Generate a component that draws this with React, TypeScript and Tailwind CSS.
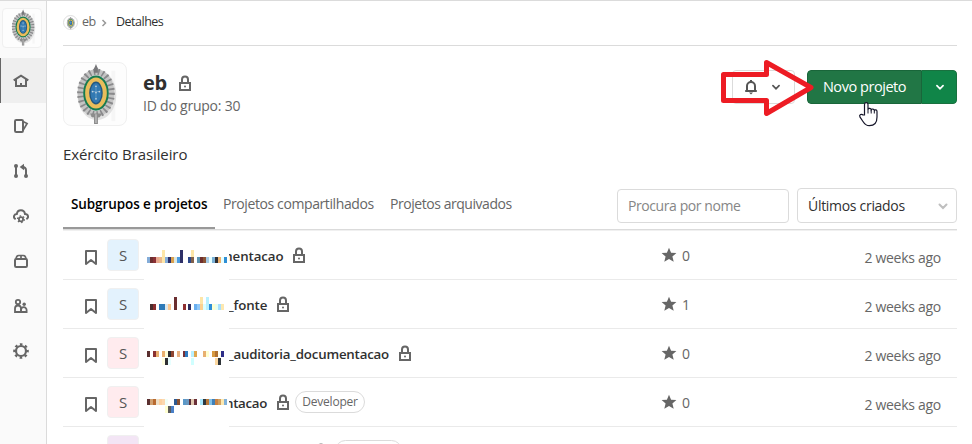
import type { ReactNode } from "react";

type Block = [column: number, color: string, level?: "up" | "down" | "tall"];

type GroupItem = {
  name: string;
  nameClass: string;
  avatarClass: string;
  mosaic: Block[];
  mosaicTop: number;
  stars: number;
  role?: string;
};

const GROUPS: GroupItem[] = [
  {
    name: "mentacao",
    nameClass: "-ml-[9px] w-[63px] tracking-[-0.1px]",
    avatarClass: "bg-[#e3f2fd]",
    mosaicTop: 26,
    stars: 0,
    mosaic: [
      [0, "#84acd8"], [1, "#6b2f30"], [2, "#8a3035"], [3, "#e9a990"], [4, "#eab88c"],
      [5, "#fde6a8", "tall"], [6, "#84acd8"], [7, "#2e3068"], [8, "#d9a04e"], [9, "#dce8e0"],
      [10, "#4a9be0"], [11, "#2e3068", "tall"], [13.7, "#2e4a8c"], [14.7, "#80604b"],
      [14.7, "#fde6a8", "up"], [16.7, "#5b93b0"], [17.7, "#6f302d"], [18.7, "#8a5435"],
      [19.7, "#a5cbe6"], [20.7, "#e4ffff"], [21.7, "#7bb0d6"], [22.7, "#2e2e33"],
      [23.7, "#edb06c"], [24.7, "#e8ffff"], [25.7, "#2e8fd5"],
    ],
  },
  {
    name: "_fonte",
    nameClass: "-ml-[1px] w-[39px] tracking-[-0.1px]",
    avatarClass: "bg-[#e3f2fd]",
    mosaicTop: 24,
    stars: 1,
    mosaic: [
      [1, "#4a2e2e"], [2, "#8a2f30"], [4, "#2e7ab8"], [5, "#2e7ab8"], [6, "#e0e8ea"],
      [7, "#fcc890"], [9, "#6b2e30", "tall"], [12, "#8f3030"], [13.7, "#2e2e60"],
      [15.7, "#6ab0f0"], [16.7, "#90c8f8"], [17.7, "#fcd090"], [17.7, "#fde6a8", "up"],
      [18.7, "#ddffff"], [19.7, "#b8f0ff", "tall"], [20.7, "#2e8fd8"], [21.7, "#ffffd0"],
      [22.7, "#e8fff0"], [23.7, "#a8e0ff"], [24.7, "#fde8b0"],
    ],
  },
  {
    name: "_auditoria_documentacao",
    nameClass: "-ml-[1px] w-[161px] tracking-[-0.2px]",
    avatarClass: "bg-[#ffebee]",
    mosaicTop: 22,
    stars: 0,
    mosaic: [
      [0, "#5a2f2f"], [2, "#8a3030"], [3, "#e8b070"], [5, "#eab070"], [6, "#ffffd8"],
      [5, "#ffffe0", "down"], [6, "#2e2e33", "down"], [7, "#2e2e33"], [7, "#e8ffff", "down"],
      [8, "#8f4530"], [10, "#e8b080"], [12, "#762f35"], [12.8, "#2e7abf"], [14.7, "#b8f0ff"],
      [14.7, "#d0ffff", "down"], [15.7, "#e0a850"], [18.7, "#e8b070"], [19.7, "#ffffd0"],
      [21.7, "#d89a40"], [22.7, "#b07030"], [22.7, "#fcd8a0", "down"], [23.7, "#fffff0"],
      [23.7, "#2e3338", "down"], [24.7, "#2e2e88"],
    ],
  },
  {
    name: "ntacao",
    nameClass: "-ml-[4px] w-[42px] tracking-[-0.3px]",
    avatarClass: "bg-[#ffebee]",
    mosaicTop: 21,
    stars: 0,
    role: "Developer",
    mosaic: [
      [0, "#5a3030"], [1, "#d0a070"], [2, "#b86a30"], [3, "#eee0c8"], [4, "#fcd0a0"],
      [5, "#fcd8b0"], [6, "#f0fff8"], [6, "#ffffd0", "down"], [7, "#5a5a5a", "down"],
      [8, "#4a80c8", "down"], [9, "#2e5a90"], [10, "#8a5030"], [12, "#5a98c8"], [13, "#6a98c0"],
      [14, "#5a2f38"], [14.8, "#e0c8b0"], [15.7, "#6a2f38"], [17.7, "#a8e8ff"],
      [18.7, "#2e3840"], [19.7, "#b87838"], [20.7, "#80c0e8"], [21.7, "#4080b8"],
      [22.7, "#c88040"], [23.7, "#d0a060"], [24.7, "#fde8b0"], [25.7, "#80b0d8"],
    ],
  },
];

function Icon({ children, className = "size-4" }: { children: ReactNode; className?: string }) {
  return (
    <svg
      viewBox="0 0 16 16"
      fill="none"
      stroke="currentColor"
      strokeWidth="2"
      className={`block shrink-0 ${className}`}
    >
      {children}
    </svg>
  );
}

function LockIcon({ className }: { className?: string }) {
  return (
    <Icon className={className}>
      <path d="M3 8h10v7H3zM5 8V4.5a3 3 0 0 1 6 0V8" />
      <circle cx="8" cy="11.5" r="1" fill="currentColor" stroke="none" />
    </Icon>
  );
}

function Chevron({ className }: { className: string }) {
  return (
    <Icon className={className}>
      <path d="m4.500 6.500 3.500 3.500 3.500-3.500" strokeLinecap="round" />
    </Icon>
  );
}

function Crest({ className }: { className: string }) {
  return (
    <svg viewBox="0 0 64 64" className={className}>
      <path d="M49 8h4v52h-4z" fill="#f6f6f6" />
      <ellipse cx="34" cy="33" rx="16" ry="22" fill="none" stroke="#e2e2e2" strokeWidth="8" />
      <ellipse cx="33" cy="31" rx="16" ry="21.5" fill="none" stroke="#c4c4c4" strokeWidth="6" />
      <ellipse
        cx="33"
        cy="31"
        rx="16.2"
        ry="22"
        fill="none"
        stroke="#89898b"
        strokeWidth="6.500"
        strokeDasharray="1.800 2.800"
      />
      <path d="m33 1 2 5h-4zM31 5h4v5h-4z" fill="#77777a" />
      <path d="M27 52h12l-2 4h-2v7h-4v-7h-2z" fill="#8c8c8c" />
      <path d="M33 53v9" stroke="#bebebe" strokeWidth="1.5" />
      <ellipse cx="33" cy="31" rx="13.2" ry="18.2" fill="#177a50" />
      <ellipse cx="33" cy="31" rx="11.2" ry="16" fill="#e9bd5b" />
      <ellipse cx="33" cy="31" rx="7" ry="11.8" fill="#23577f" />
      <ellipse cx="33" cy="31" rx="5.600" ry="10.300" fill="#3279b2" />
      <path d="M33 24v13M29.5 29.5h7" stroke="#5f9ac6" strokeWidth="1" />
      <g fill="#c4d3de">
        <circle cx="33" cy="24" r=".9" />
        <circle cx="29.5" cy="29.5" r=".9" />
        <circle cx="36.5" cy="29.5" r=".9" />
        <circle cx="33" cy="30.5" r=".9" />
        <circle cx="33" cy="37" r=".9" />
      </g>
    </svg>
  );
}

const NAV_ICONS: { label: string; icon: ReactNode }[] = [
  {
    label: "Grupo",
    icon: <path d="M.7 7.3 8 2.600l7.300 4.700M3 6.500V13h10V6.500M8 13v-3" />,
  },
  {
    label: "Issues",
    icon: (
      <>
        <rect x="2" y="2" width="8" height="12" rx="1.2" />
        <path d="m10 3.4 4.1 2.1L10 12.4" strokeWidth="1.7" />
      </>
    ),
  },
  {
    label: "Merge requests",
    icon: (
      <>
        <path d="M3 3v10M13 13V7.5C13 5 11.7 4 9.5 4" />
        <path d="M11 .8v6.4L6.7 4z" fill="currentColor" stroke="none" />
        <g fill="currentColor" stroke="none">
          <circle cx="3" cy="3" r="2" />
          <circle cx="3" cy="13" r="2" />
          <circle cx="13" cy="13" r="2" />
        </g>
      </>
    ),
  },
  {
    label: "Kubernetes",
    icon: (
      <>
        <path d="M2.7 11.2C-.2 9.5.8 6.2 3.8 6 4.7 1.1 11.2 1.2 12 6c3.2.1 4.2 3.6 1.4 5.2" />
        <circle cx="8" cy="11.2" r="2.1" strokeWidth="1.8" />
        <circle cx="8" cy="11.2" r="3.4" strokeWidth="1.3" strokeDasharray="1.5 2.06" />
      </>
    ),
  },
  {
    label: "Pacotes",
    icon: (
      <>
        <rect x="2" y="6" width="12" height="8" rx="1.2" />
        <path d="M3 6c.2-2.200 1.200-3.500 2.700-3.500h4.600C11.800 2.500 12.800 3.800 13 6M8 2v4" strokeWidth="1.7" />
      </>
    ),
  },
  {
    label: "Membros",
    icon: (
      <>
        <circle cx="5" cy="4" r="2.2" strokeWidth="1.8" />
        <path d="M2 14v-3.500a3 3 0 0 1 6 0V14z" strokeWidth="1.800" />
        <circle cx="11.200" cy="6.200" r="1.700" fill="currentColor" stroke="none" />
        <path d="M8 14v-2a2.800 2.800 0 0 1 5.600 0v2z" strokeWidth="1.800" />
      </>
    ),
  },
  {
    label: "Configurações",
    icon: (
      <>
        <circle cx="8" cy="8" r="5" strokeWidth="2.200" />
        <circle cx="8" cy="8" r="6.700" strokeWidth="2.200" strokeDasharray="2.600 2.660" strokeDashoffset="1.300" />
      </>
    ),
  },
];

function Sidebar() {
  return (
    <nav className="w-[47px] shrink-0 border-r border-[#dbdbdb] bg-[#fafafa] pt-[7px]">
      <div className="ml-0.5 size-10 rounded border border-[#f0f0f0] bg-[#fdfdfd]">
        <Crest className="ml-px size-[37px]" />
      </div>
      <ul className="mt-2.5 text-[#666]">
        {NAV_ICONS.map(({ label, icon }, index) => (
          <li
            key={label}
            aria-label={label}
            className={
              index === 0
                ? "flex h-[45px] items-center border-l border-[#666] bg-[#efefef] pl-3"
                : "flex h-[45px] items-center pl-[13px]"
            }
          >
            <Icon>{icon}</Icon>
          </li>
        ))}
      </ul>
    </nav>
  );
}

function Mosaic({ blocks, top }: { blocks: Block[]; top: number }) {
  return (
    <svg
      width="85"
      height="49"
      viewBox="0 0 85 49"
      shapeRendering="crispEdges"
      className="relative z-10 ml-[5px] h-[49px] shrink-0 bg-white"
    >
      {blocks.map(([column, color, level], index) => (
        <rect
          key={index}
          x={3 + column * 3}
          y={level === "up" || level === "tall" ? top - 7 : level === "down" ? top + 7 : top - 0.5}
          width="3"
          height={level === "tall" ? 13 : 6.6}
          fill={color}
        />
      ))}
    </svg>
  );
}

function GroupRow({ group }: { group: GroupItem }) {
  return (
    <li className="flex h-[49px] border-b border-[#eaeaea]">
      <Icon className="mt-[18px] ml-5 size-4 text-[#666]">
        <path d="M3 2h10v13L8 11l-5 4z" strokeLinejoin="round" />
      </Icon>
      <div
        className={`mt-2 ml-2 flex size-8 shrink-0 items-center justify-center rounded border border-[#f0f0f0] text-[15px] text-[#555] ${group.avatarClass}`}
      >
        S
      </div>
      <Mosaic blocks={group.mosaic} top={group.mosaicTop} />
      <span
        className={`mt-[15px] h-5 shrink-0 text-[13.3px] leading-5 font-semibold whitespace-nowrap text-[#303030] ${group.nameClass}`}
      >
        {group.name}
      </span>
      <LockIcon className="mt-4 ml-2 size-4 text-[#666]" />
      {group.role ? (
        <span className="mt-[13px] ml-1 flex h-[22px] w-[70px] items-center justify-center rounded-full border border-[#dbdbdb] text-[12px] tracking-[-0.2px] text-[#666]">
          {group.role}
        </span>
      ) : null}
      <div className="ml-auto flex w-[296px] shrink-0 text-[#666]">
        <svg viewBox="0 0 16 16" className="mt-4 size-4" fill="currentColor">
          <path d="m8 .8 2.100 4.900 5.300.4-4 3.500 1.300 5.200L8 12l-4.700 2.800 1.300-5.200-4-3.500 5.300-.4z" />
        </svg>
        <span className="mt-[15px] ml-[5px] text-[14px] leading-5">{group.stars}</span>
        <span className="mt-[17px] mr-4 ml-auto text-[14px] leading-5 tracking-[-0.28px]">2 weeks ago</span>
      </div>
    </li>
  );
}

function NewProjectButton() {
  return (
    <div className="flex h-[34px] w-[150px] overflow-hidden rounded text-white">
      <button
        type="button"
        className="w-[115px] rounded-l border border-[#19663a] bg-[#217645] text-[14.5px] tracking-[-0.45px] whitespace-nowrap"
      >
        Novo projeto
      </button>
      <button
        type="button"
        aria-label="Mais opções"
        className="flex flex-1 items-center justify-center rounded-r border border-l-0 border-[#19713f] bg-[#108548] pl-0.5"
      >
        <Chevron className="size-3.5" />
      </button>
    </div>
  );
}

function Pointers() {
  return (
    <svg
      width="170"
      height="80"
      viewBox="0 0 170 80"
      fill="none"
      className="pointer-events-none absolute top-[49px] left-[715px] z-20"
    >
      <path
        d="M8.500 24.500h43v-12L96 37.500 51.500 63.500V50.500h-43z"
        stroke="#ed1c24"
        strokeWidth="5"
        strokeLinejoin="round"
      />
      <path
        d="M149.500 65V54.500c0-2.400 3.500-2.400 3.500 0v4.800c.4-1.300 3-1.100 3.200.4.500-1.100 2.900-.8 3.200.6.600-.9 2.600-.5 2.600 1.200v5.500c0 5-2.300 8.700-7.600 8.700-3.600 0-4.900-1.700-6.600-4.500l-2.900-4.300c-1-2 1.600-3.500 3.200-1.900z"
        fill="#fff"
        stroke="#16162a"
        strokeWidth="1.200"
      />
      <path d="M153 59v4.500M156.200 60v3.500M159.300 60.500v3" stroke="#16162a" />
    </svg>
  );
}

export default function App() {
  return (
    <div className="relative flex h-[444px] w-[972px] overflow-hidden border-t border-[#dbdbdb] bg-white font-['Open_Sans','Noto_Sans',sans-serif] text-[#303030]">
      <Sidebar />
      <main className="flex min-w-0 flex-1 flex-col pr-[15px] pl-4">
        <nav className="flex h-[45px] shrink-0 items-center border-b border-[#dbdbdb] pb-px text-[12.5px]">
          <div className="flex size-[15px] shrink-0 items-center justify-center rounded-full border border-[#dedede]">
            <Crest className="size-3.5" />
          </div>
          <span className="ml-1 w-[13px] tracking-[-0.5px] text-[#666]">eb</span>
          <Icon className="ml-[3px] size-3 text-[#999]">
            <path d="m6 4 4 4-4 4" />
          </Icon>
          <span className="ml-[6px] w-12 tracking-[-0.5px]">Detalhes</span>
        </nav>

        <header className="mt-4 flex h-16 shrink-0">
          <div className="size-16 shrink-0 rounded-lg border border-[#f0f0f0] bg-[#fdfdfd]">
            <Crest className="size-[62px]" />
          </div>
          <div className="mt-1.5 ml-4">
            <h1 className="flex h-[29px] items-center text-[20px] font-bold tracking-[-0.4px]">
              eb
              <LockIcon className="ml-2.5 size-4 text-[#666]" />
            </h1>
            <p className="text-[14px] leading-[17px] tracking-[-0.22px] whitespace-nowrap text-[#666]">
              ID do grupo: 30
            </p>
          </div>
          <div className="mt-2 ml-auto flex gap-3">
            <button
              type="button"
              aria-label="Notificações"
              className="flex h-[34px] w-[63px] items-center rounded border border-[#dbdbdb] pl-2.5 text-[#555]"
            >
              <Icon>
                <path d="M2.200 12h11.600M4 11.500V7a4 4 0 0 1 8 0v4.500" />
                <path d="M6 13.500h4L8 15.500zM7 1h2v2H7z" fill="currentColor" stroke="none" />
              </Icon>
              <Chevron className="ml-2.5 size-3.5" />
            </button>
            <NewProjectButton />
          </div>
        </header>

        <p className="mt-4 h-6 shrink-0 text-[15px] leading-6 tracking-[-0.1px]">Exército Brasileiro</p>

        <div className="mt-[21px] flex h-[43px] shrink-0 border-b border-[#dbdbdb] text-[14px]">
          <div className="flex leading-[34px] whitespace-nowrap text-[#666]">
            <span className="w-[152px] border-b-2 border-[#999] pl-2 text-[13.5px] font-semibold tracking-[-0.1px] text-black">
              Subgrupos e projetos
            </span>
            <span className="ml-2 w-[167px] tracking-[-0.4px]">Projetos compartilhados</span>
            <span className="tracking-[-0.45px]">Projetos arquivados</span>
          </div>
          <div className="ml-auto flex gap-2">
            <input
              aria-label="Procura por nome"
              placeholder="Procura por nome"
              className="mt-0.5 h-[34px] w-[172px] rounded border border-[#dbdbdb] px-2.5 pb-0.5 text-[14px] tracking-[-0.42px] placeholder:text-[#868686]"
            />
            <button
              type="button"
              className="mt-px flex h-[35px] w-40 items-center justify-between rounded border border-[#dbdbdb] pr-[5px] pl-2.5 tracking-[-0.3px] whitespace-nowrap"
            >
              Últimos criados
              <Chevron className="size-4 text-[#bfbfbf]" />
            </button>
          </div>
        </div>

        <ul className="shrink-0 border-t border-[#f0f0f0]">
          {GROUPS.map((group) => (
            <GroupRow key={group.name} group={group} />
          ))}
          <li className="flex h-[49px]">
            <div className="mt-2 ml-11 size-8 rounded border border-[#f0f0f0] bg-[#f3e5f5]" />
            <LockIcon className="mt-4 ml-[174px] size-4 text-[#666]" />
            <span className="mt-[13px] ml-1.5 h-[21px] w-[67px] rounded-full border border-[#dbdbdb]" />
          </li>
        </ul>
      </main>
      <Pointers />
    </div>
  );
}
